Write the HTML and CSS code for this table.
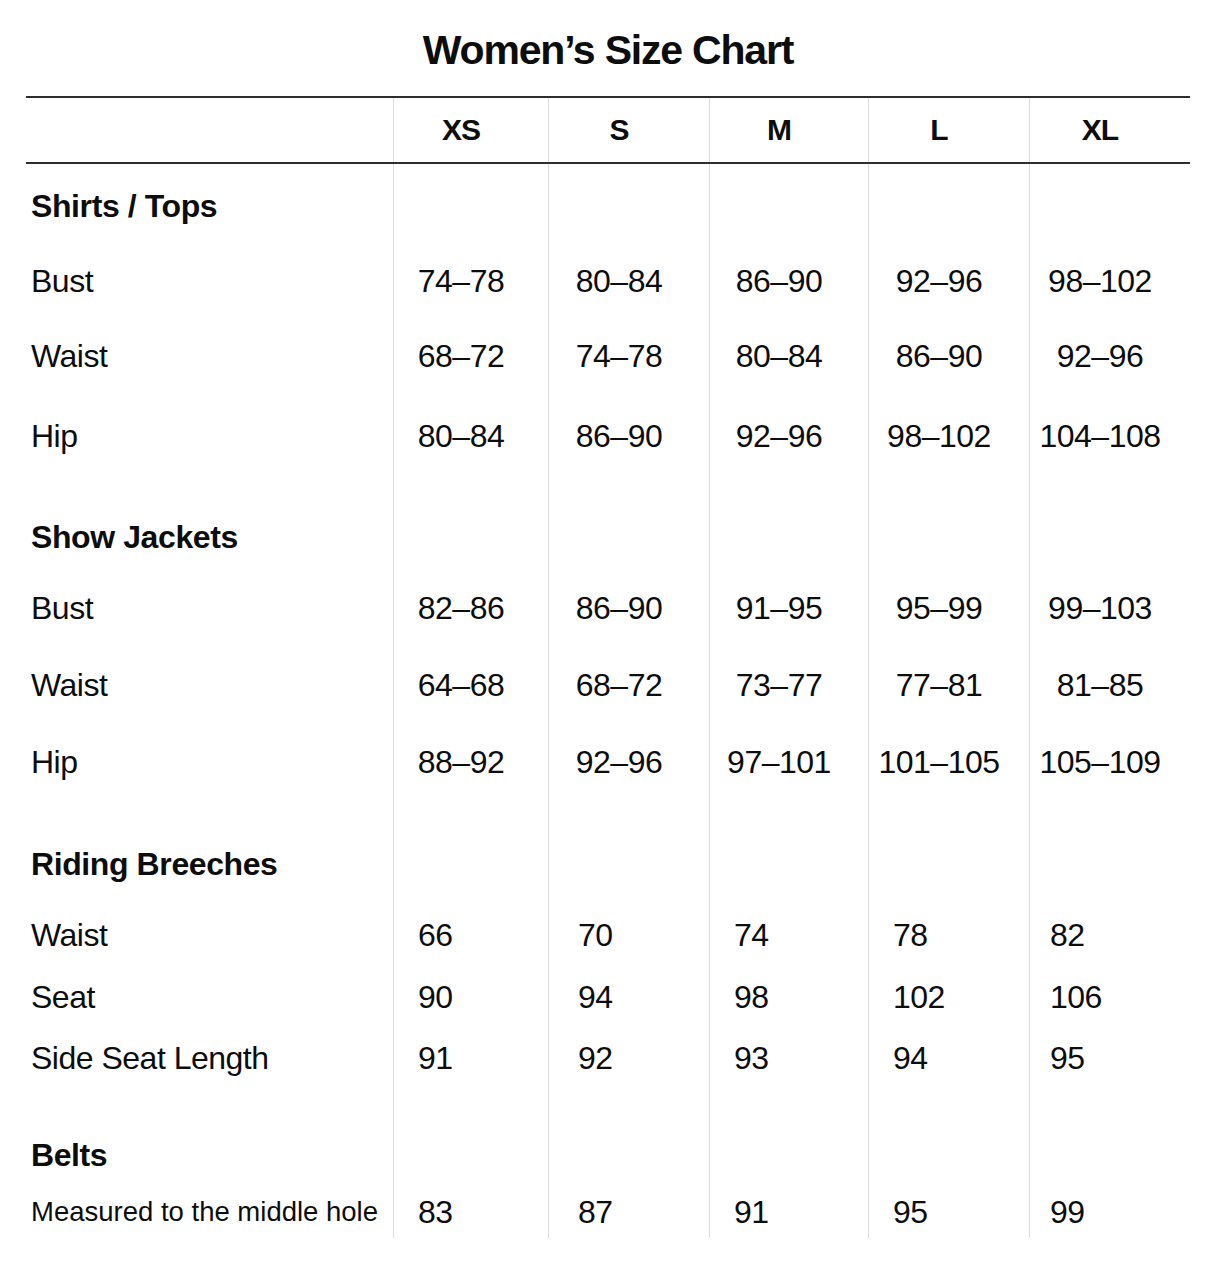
FILE: index.html
```html
<!DOCTYPE html>
<html lang="en">
<head>
<meta charset="utf-8">
<title>Women’s Size Chart</title>
<link rel="stylesheet" href="styles.css">
</head>
<body>
<div class="chart">
  <h1 class="title">Women’s Size Chart</h1>
  <div class="table">
    <div class="row head">
      <div class="cell label"></div>
      <div class="cell size">XS</div>
      <div class="cell size">S</div>
      <div class="cell size">M</div>
      <div class="cell size">L</div>
      <div class="cell size">XL</div>
    </div>

    <div class="row first h75">
      <div class="cell label section">Shirts / Tops</div>
      <div class="cell"></div><div class="cell"></div><div class="cell"></div><div class="cell"></div><div class="cell"></div>
    </div>
    <div class="row h75">
      <div class="cell label">Bust</div>
      <div class="cell rng">74–78</div><div class="cell rng">80–84</div><div class="cell rng">86–90</div><div class="cell rng">92–96</div><div class="cell rng">98–102</div>
    </div>
    <div class="row h80">
      <div class="cell label">Waist</div>
      <div class="cell rng">68–72</div><div class="cell rng">74–78</div><div class="cell rng">80–84</div><div class="cell rng">86–90</div><div class="cell rng">92–96</div>
    </div>
    <div class="row h101">
      <div class="cell label">Hip</div>
      <div class="cell rng">80–84</div><div class="cell rng">86–90</div><div class="cell rng">92–96</div><div class="cell rng">98–102</div><div class="cell rng">104–108</div>
    </div>

    <div class="row h71">
      <div class="cell label section">Show Jackets</div>
      <div class="cell"></div><div class="cell"></div><div class="cell"></div><div class="cell"></div><div class="cell"></div>
    </div>
    <div class="row h77">
      <div class="cell label">Bust</div>
      <div class="cell rng">82–86</div><div class="cell rng">86–90</div><div class="cell rng">91–95</div><div class="cell rng">95–99</div><div class="cell rng">99–103</div>
    </div>
    <div class="row h77">
      <div class="cell label">Waist</div>
      <div class="cell rng">64–68</div><div class="cell rng">68–72</div><div class="cell rng">73–77</div><div class="cell rng">77–81</div><div class="cell rng">81–85</div>
    </div>
    <div class="row h102">
      <div class="cell label">Hip</div>
      <div class="cell rng">88–92</div><div class="cell rng">92–96</div><div class="cell rng">97–101</div><div class="cell rng">101–105</div><div class="cell rng">105–109</div>
    </div>

    <div class="row h71">
      <div class="cell label section">Riding Breeches</div>
      <div class="cell"></div><div class="cell"></div><div class="cell"></div><div class="cell"></div><div class="cell"></div>
    </div>
    <div class="row h62">
      <div class="cell label">Waist</div>
      <div class="cell num">66</div><div class="cell num">70</div><div class="cell num">74</div><div class="cell num">78</div><div class="cell num">82</div>
    </div>
    <div class="row h61">
      <div class="cell label">Seat</div>
      <div class="cell num">90</div><div class="cell num">94</div><div class="cell num">98</div><div class="cell num">102</div><div class="cell num">106</div>
    </div>
    <div class="row h97">
      <div class="cell label">Side Seat Length</div>
      <div class="cell num">91</div><div class="cell num">92</div><div class="cell num">93</div><div class="cell num">94</div><div class="cell num">95</div>
    </div>

    <div class="row h57">
      <div class="cell label section">Belts</div>
      <div class="cell"></div><div class="cell"></div><div class="cell"></div><div class="cell"></div><div class="cell"></div>
    </div>
    <div class="row h46">
      <div class="cell label small">Measured to the middle hole</div>
      <div class="cell num">83</div><div class="cell num">87</div><div class="cell num">91</div><div class="cell num">95</div><div class="cell num">99</div>
    </div>
  </div>
</div>
</body>
</html>
```

FILE: styles.css
```css
html, body {
  margin: 0;
  padding: 0;
  background: #ffffff;
}

body {
  font-family: "Liberation Sans", Arial, sans-serif;
  color: #0d0d0d;
}

.chart {
  width: 1164px;
  margin-left: 26px;
  padding-top: 22px;
  padding-bottom: 47px;
}

.title {
  margin: 0 0 18px 0;
  font-family: "Liberation Sans", Arial, sans-serif;
  font-weight: 700;
  font-size: 41px;
  letter-spacing: -1.2px;
  line-height: 56px;
  text-align: center;
  color: #0d0d0d;
}

.table {
  border-top: 2px solid #2e2e2e;
}

.row {
  display: grid;
  grid-template-columns: 367px 155px 161px 159px 161px 161px;
}

.row.head {
  height: 66px;
  border-bottom: 2px solid #2e2e2e;
  box-sizing: border-box;
}

.cell {
  box-sizing: border-box;
  font-size: 32px;
  letter-spacing: -0.5px;
  line-height: 40px;
  border-left: 1px solid #dcdcdc;
  white-space: nowrap;
}

.cell.label {
  border-left: none;
  padding-left: 5px;
}

.head .cell {
  line-height: 64px;
}

.cell.size {
  font-weight: 700;
  font-size: 30px;
  letter-spacing: -1px;
  text-align: center;
  padding-right: 20px;
}

.cell.rng {
  text-align: center;
  padding-right: 20px;
}

.cell.num {
  text-align: left;
  padding-left: 24px;
}

.cell.num:nth-child(3) {
  padding-left: 29px;
}

.cell.num:nth-child(6) {
  padding-left: 20px;
}

.cell.section {
  font-weight: 700;
  letter-spacing: -0.4px;
}

.cell.small {
  font-size: 27.5px;
  letter-spacing: 0;
}

.row.first .cell {
  padding-top: 22px;
}

.h46 { height: 46px; }
.h57 { height: 57px; }
.h61 { height: 61px; }
.h62 { height: 62px; }
.h71 { height: 71px; }
.h75 { height: 75px; }
.h77 { height: 77px; }
.h80 { height: 80px; }
.h97 { height: 97px; }
.h101 { height: 101px; }
.h102 { height: 102px; }

.row.first.h75 { height: 97px; }
```
